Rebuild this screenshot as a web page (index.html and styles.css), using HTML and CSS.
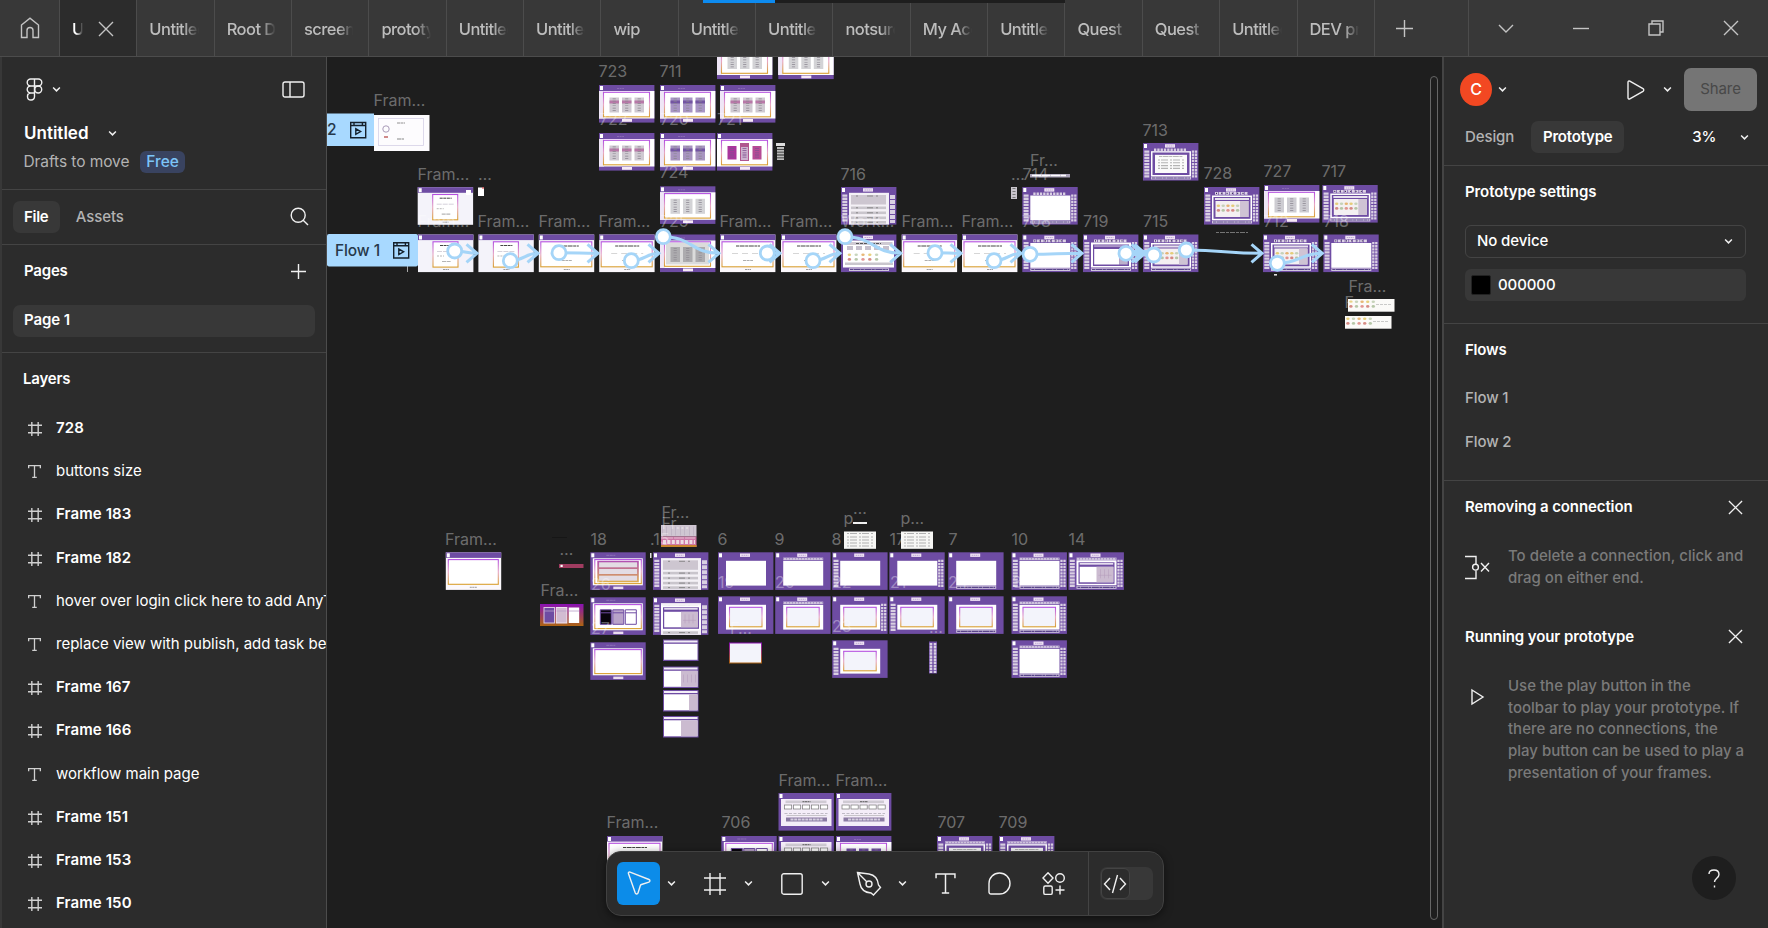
FILE: index.html
```html
<!DOCTYPE html>
<html lang="en">
<head>
<meta charset="utf-8">
<title>Untitled</title>
<link rel="stylesheet" href="styles.css">
</head>
<body>
<svg class="defs" width="0" height="0">
  <defs>
    <linearGradient id="glow" x1="0" y1="0" x2="0" y2="1"><stop offset="0" stop-color="#b44fe0"/><stop offset=".5" stop-color="#e6a6c4"/><stop offset="1" stop-color="#d9a030"/></linearGradient>
    <linearGradient id="fire" x1="0" y1="0" x2="0" y2="1"><stop offset="0" stop-color="#8a12b4"/><stop offset="1" stop-color="#ad6412"/></linearGradient>
    <linearGradient id="fade" x1="0" y1="0" x2="0" y2="1"><stop offset="0" stop-color="#b04fb4"/><stop offset="1" stop-color="#dfb04c"/></linearGradient>
    <symbol id="chev" viewBox="0 0 8 6"><path d="M1 1.2 4 4.2 7 1.2"/></symbol>
    <symbol id="hash" viewBox="0 0 22 22"><path d="M6 0v22M16 0v22M0 5h22M0 17h22"/></symbol>
    <symbol id="tee" viewBox="0 0 20 20"><path d="M1 5V1h18v4M10 1v18M6.5 19h7"/></symbol>
    <symbol id="cross" viewBox="0 0 16 16"><path d="M1 1 15 15M15 1 1 15"/></symbol>
  </defs>
</svg>

<header class="tabs">
  <div class="home"><svg class="ic" width="20" height="22" viewBox="0 0 20 22"><path d="M1.500 8 10 1.200 18.500 8V20.500H13V13.500a3 3 0 0 0-6 0V20.500H1.500Z"/></svg></div>
  <div class="tab active"><span class="name">Untitled</span><svg class="ic" width="16" height="16"><use href="#cross"/></svg></div>
  <div class="tab"><span class="name">Untitled</span></div>
  <div class="tab"><span class="name">Root Do</span></div>
  <div class="tab"><span class="name">screens</span></div>
  <div class="tab"><span class="name">prototype</span></div>
  <div class="tab"><span class="name">Untitled</span></div>
  <div class="tab"><span class="name">Untitled</span></div>
  <div class="tab"><span class="name">wip</span></div>
  <div class="tab"><span class="name">Untitled</span></div>
  <div class="tab"><span class="name">Untitled</span></div>
  <div class="tab"><span class="name">notsure</span></div>
  <div class="tab"><span class="name">My Acc</span></div>
  <div class="tab"><span class="name">Untitled</span></div>
  <div class="tab"><span class="name">Quest</span></div>
  <div class="tab"><span class="name">Quest</span></div>
  <div class="tab"><span class="name">Untitled</span></div>
  <div class="tab"><span class="name">DEV pr</span></div>
  <div class="newtab"><svg class="ic" width="17" height="17" viewBox="0 0 17 17"><path d="M8.500 0V17M0 8.500H17"/></svg></div>
  <div class="win">
    <svg class="ic" width="16" height="9" viewBox="0 0 16 9"><path d="M1 1 8 8 15 1"/></svg>
    <svg class="ic" width="16" height="4" viewBox="0 0 16 4"><path d="M0 2.500H16"/></svg>
    <svg class="ic" width="16" height="16" viewBox="0 0 16 16"><path d="M1 4H12V15H1ZM4 4V1H15V12H12"/></svg>
    <svg class="ic" width="16" height="16"><use href="#cross"/></svg>
  </div>
  <div class="progress"></div>
</header>

<main class="body">
  <aside class="left">
    <section class="filehead">
      <div class="row brand">
        <svg class="ic" width="17" height="23" viewBox="0 0 17 23"><path d="M8.500 1H4.700a3.400 3.400 0 0 0 0 7H8.500ZM8.500 1h3.800a3.400 3.400 0 0 1 0 7H8.500ZM8.500 8H4.700a3.400 3.400 0 0 0 0 7H8.500ZM8.500 15H4.700a3.500 3.500 0 1 0 3.800 3.500Z"/><circle cx="12.200" cy="11.500" r="3.500"/></svg>
        <svg class="ic chev" width="9" height="7"><use href="#chev"/></svg>
        <svg class="ic end" width="23" height="17" viewBox="0 0 23 17"><rect x="1" y="1" width="21" height="15" rx="2"/><path d="M8 1V16"/></svg>
      </div>
      <div class="row title"><span>Untitled</span><svg class="ic chev" width="9" height="7"><use href="#chev"/></svg></div>
      <div class="row place"><span>Drafts to move</span><b class="free">Free</b></div>
    </section>
    <section class="row modes">
      <span class="pill">File</span><span class="muted">Assets</span>
      <svg class="ic end" width="19" height="19" viewBox="0 0 19 19"><circle cx="8.200" cy="8.200" r="7"/><path d="M13.200 13.200 18 18"/></svg>
    </section>
    <section class="pages">
      <div class="row"><h2>Pages</h2><svg class="ic end" width="15" height="15" viewBox="0 0 15 15"><path d="M7.500 0V15M0 7.500H15"/></svg></div>
      <div class="page">Page 1</div>
    </section>
    <section class="layers">
      <h2>Layers</h2>
      <ul>
        <li class="frame"><svg class="ic" width="14" height="14"><use href="#hash"/></svg>728</li>
        <li><svg class="ic" width="13" height="13"><use href="#tee"/></svg>buttons size</li>
        <li class="frame"><svg class="ic" width="14" height="14"><use href="#hash"/></svg>Frame 183</li>
        <li class="frame"><svg class="ic" width="14" height="14"><use href="#hash"/></svg>Frame 182</li>
        <li><svg class="ic" width="13" height="13"><use href="#tee"/></svg>hover over login click here to add AnyText</li>
        <li><svg class="ic" width="13" height="13"><use href="#tee"/></svg>replace view with publish, add task below</li>
        <li class="frame"><svg class="ic" width="14" height="14"><use href="#hash"/></svg>Frame 167</li>
        <li class="frame"><svg class="ic" width="14" height="14"><use href="#hash"/></svg>Frame 166</li>
        <li><svg class="ic" width="13" height="13"><use href="#tee"/></svg>workflow main page</li>
        <li class="frame"><svg class="ic" width="14" height="14"><use href="#hash"/></svg>Frame 151</li>
        <li class="frame"><svg class="ic" width="14" height="14"><use href="#hash"/></svg>Frame 153</li>
        <li class="frame"><svg class="ic" width="14" height="14"><use href="#hash"/></svg>Frame 150</li>
      </ul>
    </section>
  </aside>

  <div class="stage">
    <svg id="canvas" class="canvas" viewBox="327 57 1115 871"></svg>
    <div class="scroll"></div>
    <nav class="toolbar">
      <span class="tool on"><svg class="ic" width="24" height="25" viewBox="0 0 24 25"><path d="M1.500 2.700c-.4-1.100.5-2 1.600-1.600L22 8.500c1.300.5 1.200 2.200-.1 2.600L14.500 13.500a2 2 0 0 0-1.200 1.200L11 22c-.4 1.300-2.200 1.400-2.700.1Z"/></svg></span>
      <svg class="ic chev" width="9" height="7"><use href="#chev"/></svg>
      <span class="tool"><svg class="ic" width="22" height="22"><use href="#hash"/></svg></span>
      <svg class="ic chev" width="9" height="7"><use href="#chev"/></svg>
      <span class="tool"><svg class="ic" width="22" height="22" viewBox="0 0 22 22"><rect x=".8" y=".8" width="20.400" height="20.400" rx="2"/></svg></span>
      <svg class="ic chev" width="9" height="7"><use href="#chev"/></svg>
      <span class="tool"><svg class="ic" width="26" height="26" viewBox="0 0 26 26"><path d="M1.500 1.500 13 3c6 1 9 6 9.500 11l2 2.500-7 7.500-2.500-2C9 21.500 5 18.500 4 13ZM1.500 1.500 11 11"/><circle cx="13" cy="13" r="3"/></svg></span>
      <svg class="ic chev" width="9" height="7"><use href="#chev"/></svg>
      <span class="tool solo"><svg class="ic" width="21" height="21"><use href="#tee"/></svg></span>
      <span class="tool solo"><svg class="ic" width="23" height="23" viewBox="0 0 23 23"><path d="M11.500 1a10.500 10.500 0 0 1 0 21H3a2 2 0 0 1-2-2V11.500A10.500 10.500 0 0 1 11.500 1Z"/></svg></span>
      <span class="tool solo"><svg class="ic" width="24" height="24" viewBox="0 0 24 24"><path d="M6 .8 11 6 6 11.200 1 6ZM18 13.500v9M13.500 18h9"/><circle cx="18" cy="6" r="4.300"/><rect x="1.800" y="14" width="8.400" height="8.400" rx="1.500"/></svg></span>
      <span class="sep"></span>
      <span class="switch"><i><svg class="ic" width="24" height="20" viewBox="0 0 24 20"><path d="M7 4 1.500 10 7 16M17 4 22.500 10 17 16M14.500 1 9.500 19"/></svg></i></span>
    </nav>
  </div>

  <aside class="right">
    <section class="account">
      <div class="row top">
        <span class="avatar">C</span><svg class="ic chev" width="9" height="7"><use href="#chev"/></svg>
        <svg class="ic play" width="18" height="20" viewBox="0 0 18 20"><path d="M1 2.300c0-1 .9-1.600 1.800-1.100L16 8.700c1 .6 1 2 0 2.600L2.800 18.800c-.9.500-1.800-.1-1.800-1.100Z"/></svg>
        <svg class="ic chev" width="9" height="7"><use href="#chev"/></svg>
        <span class="share">Share</span>
      </div>
      <div class="row switcher"><span class="muted">Design</span><span class="pill">Prototype</span><span class="zoom">3%</span><svg class="ic chev" width="9" height="7"><use href="#chev"/></svg></div>
    </section>
    <section class="settings">
      <h2>Prototype settings</h2>
      <div class="row select"><span>No device</span><svg class="ic chev" width="9" height="7"><use href="#chev"/></svg></div>
      <div class="row color"><i></i><span>000000</span></div>
    </section>
    <section class="flows">
      <h2>Flows</h2>
      <p>Flow 1</p>
      <p>Flow 2</p>
    </section>
    <section class="help">
      <div class="row tiphead"><h2>Removing a connection</h2><svg class="ic end" width="15" height="15"><use href="#cross"/></svg></div>
      <div class="tip"><svg class="ic" width="26" height="25" viewBox="0 0 26 25"><path d="M0 1.500H11V9M11 15.500V23.500H0M16 8 24 16.500M24 8 16 16.500"/><circle cx="10.500" cy="12.200" r="2.900"/></svg><p>To delete a connection, click and<br>drag on either end.</p></div>
      <div class="row tiphead second"><h2>Running your prototype</h2><svg class="ic end" width="15" height="15"><use href="#cross"/></svg></div>
      <div class="tip run"><svg class="ic" width="26" height="18" viewBox="0 0 26 18"><path d="M7 2 18 9 7 16Z"/></svg><p>Use the play button in the<br>toolbar to play your prototype. If<br>there are no connections, the<br>play button can be used to play a<br>presentation of your frames.</p></div>
    </section>
    <div class="ask"><svg class="ic" width="12" height="19" viewBox="0 0 12 19"><path d="M1 5C1 2.500 3 1 6 1s5 1.700 5 4.500C11 9 6.500 9.500 6.500 13M6.500 16.500v2"/></svg></div>
  </aside>
</main>
<script src="canvas.js"></script>
</body>
</html>
```
FILE: styles.css
```css
* { box-sizing: border-box; }
body { margin: 0; width: 1768px; height: 928px; overflow: hidden; background: #1e1e1e; color: #fff; font: 500 15px/20px Inter, "Liberation Sans", sans-serif; letter-spacing: -0.1px; display: flex; flex-direction: column; }
h2, p, ul { margin: 0; padding: 0; font: inherit; }
h2 { font-weight: 600; letter-spacing: -0.2px; }
.defs { position: absolute; }
.ic { fill: none; stroke: #f0f0f0; stroke-width: 1.4; flex: none; display: block; }
.ic.chev { stroke-width: 1.3; }
.row { display: flex; align-items: center; }
.end { margin-left: auto; }
.muted { color: #b3b3b3; }

.tabs { position: relative; flex: none; height: 57px; background: #383838; border-bottom: 1px solid #4c4c4c; display: flex; }
.tabs .ic { stroke: #c4c4c4; }
.home { flex: none; width: 60px; border-right: 1px solid #4c4c4c; display: flex; align-items: center; justify-content: center; }
.tab { flex: none; width: 77.35px; border-right: 1px solid #4c4c4c; padding: 1px 15px 0 12px; display: flex; align-items: center; color: #bdbdbd; font-size: 16.5px; letter-spacing: -0.55px; }
.tab .name { flex: 1; min-width: 0; overflow: hidden; white-space: nowrap; -webkit-mask-image: linear-gradient(90deg, #000 70%, transparent); mask-image: linear-gradient(90deg, #000 70%, transparent); }
.tab.active { background: #2c2c2c; color: #fff; padding-right: 21px; }
.tab.active .name { flex: 0 0 11px; margin-right: 15px; -webkit-mask-image: linear-gradient(90deg, #000 35%, transparent); mask-image: linear-gradient(90deg, #000 35%, transparent); }
.newtab { flex: none; width: 94px; border-right: 1px solid #4c4c4c; padding-left: 21px; display: flex; align-items: center; }
.win { display: flex; align-items: center; gap: 59px; padding-left: 29px; }
.progress { position: absolute; left: 703px; top: 0; width: 362px; height: 3px; background: linear-gradient(90deg, #0d8bf0 72px, #1e1e1e 72px); }

.body { flex: 1; min-height: 0; display: flex; }
.left { width: 327px; flex: none; background: #2c2c2c; border-left: 2px solid #383838; border-right: 1px solid #4c4c4c; overflow: hidden; }
.left section { border-bottom: 1px solid #444; }
.filehead { height: 133px; padding: 20px 21px 0 24px; }
.brand { height: 25px; gap: 8.5px; }
.title { margin-top: 20px; height: 22px; gap: 19px; font-size: 17px; font-weight: 600; letter-spacing: 0; margin-left: -2px; }
.place { margin-top: 7px; height: 22px; gap: 11px; color: #b3b3b3; font-weight: 400; font-size: 15.5px; letter-spacing: -0.08px; margin-left: -2.5px; }
.free { background: #394360; color: #7cc4f8; border-radius: 6px; padding: 1px 6px; font-weight: 500; }
.modes { height: 55px; padding: 0 17px 1px 11px; gap: 16px; }
.modes .pill { padding: 0 11.5px 0 11px; }
.pill { background: #383838; border-radius: 7px; font-weight: 600; height: 32px; line-height: 31px; padding: 0 11px; letter-spacing: -0.3px; }
.left .layers { border: 0; }
.pages { height: 108px; padding: 15px 11px 0 11px; }
.pages .row { height: 22px; padding: 0 9px 0 11px; }
.page { margin-top: 23px; height: 32px; line-height: 29px; background: #383838; border-radius: 7px; padding-left: 11px; font-weight: 600; letter-spacing: -0.1px; }
.layers { padding: 16px 0 0 21px; }
.layers ul { list-style: none; margin-top: 17.5px; }
.layers li { height: 43.2px; display: flex; align-items: center; gap: 15px; padding-left: 5px; white-space: nowrap; font-weight: 400; letter-spacing: 0; }
.layers li.frame { font-weight: 600; gap: 14px; letter-spacing: .1px; }
.layers .frame .ic { stroke-width: 2.2; margin-top: 2px; }
.layers .ic { stroke: #d0d0d0; stroke-width: 2; margin-top: 1px; }

.stage { position: relative; flex: 1; min-width: 0; background: #1e1e1e; }
.canvas { display: block; width: 1115px; height: 871px; }
.canvas .label { fill: #fff; fill-opacity: .36; font: 400 16px Inter, sans-serif; letter-spacing: 0; }
.canvas .tag { fill: #26384a; font: 500 15.5px Inter, sans-serif; letter-spacing: -0.1px; }
.canvas .wire { fill: none; stroke: #a5d5f8; stroke-width: 3; }
.canvas .knob { fill: #fff; stroke: #a5d5f8; stroke-width: 2.8; }
.scroll { position: absolute; left: 1103px; top: 19px; width: 8px; height: 844px; border: 1px solid #666; border-radius: 4px; }
.toolbar { position: absolute; left: 279px; top: 794px; width: 558px; height: 65px; background: #2c2c2c; border: 1px solid #414141; border-radius: 15px; box-shadow: 0 2px 8px rgba(0,0,0,.5); display: flex; align-items: center; padding-left: 10px; }
.tool { width: 43px; height: 43px; display: flex; align-items: center; justify-content: center; border-radius: 6px; }
.tool:not(.on) .ic { margin-left: -1px; }
.toolbar .solo .ic { margin-left: -3px; }
.on { background: #0c8ce9; }
.toolbar .chev { margin: 0 18px 0 7px; }
.solo { margin-right: 11.3px; }
.sep { width: 1px; height: 63px; background: #444; }
.switch { width: 53px; height: 33px; margin-left: 11px; background: #383838; border-radius: 7px; }
.switch i { width: 29px; height: 31px; margin: 1px; border: 1px solid #444; border-radius: 6px; background: #2c2c2c; display: flex; align-items: center; justify-content: center; }

.right { position: relative; width: 326px; flex: none; background: #2c2c2c; border-left: 2px solid #444; }
.right section { border-bottom: 1px solid #444; }
.account { height: 109px; padding: 11px 11px 0 16px; }
.top { height: 43px; }
.avatar { width: 32px; height: 33px; border-radius: 50%; background: #f24822; text-align: center; line-height: 33px; font-size: 16px; margin-right: 6px; }
.play { margin: 0 18px 0 120px; }
.share { margin-left: auto; width: 73px; height: 43px; line-height: 41px; text-align: center; background: #757575; color: #484848; border-radius: 7px; font-weight: 400; }
.switcher { height: 32px; margin-top: 10px; padding-left: 5px; }
.switcher .pill { margin-left: 17px; width: 93px; padding: 0; text-align: center; letter-spacing: -0.2px; }
.zoom { margin-left: 68px; margin-right: 21px; width: 27px; white-space: nowrap; }
.settings { height: 158px; padding: 16px 22px 0 21px; }
.select { margin-top: 23px; height: 33px; border: 1px solid #444; border-radius: 6px; padding: 0 12px 1px 11px; justify-content: space-between; }
.color { margin-top: 11px; height: 32px; background: #383838; border-radius: 6px; padding: 0 7px 0 6px; gap: 7px; }
.color i { width: 20px; height: 20px; background: #000; border: 1px solid #222; border-radius: 2px; }
.settings h2, .help h2 { letter-spacing: -0.1px; }
.flows { height: 157px; padding: 16px 22px 0 21px; }
.flows p { margin-top: 28px; color: #b3b3b3; }
.flows p + p { margin-top: 24px; }
.right .help { border: 0; padding: 15px 18px 0 21px; }
.tiphead { height: 22px; padding-right: 7px; }
.tip { margin-top: 27px; display: flex; gap: 17px; color: #7a7a7a; line-height: 21.7px; }
.tip p { white-space: nowrap; letter-spacing: 0; }
.tip .ic { margin-top: 10px; }
.run .ic { margin-top: 13px; }
.second { margin-top: 37.5px; }
.ask { position: absolute; left: 248px; top: 799px; width: 44px; height: 44px; border-radius: 50%; background: #1e1e1e; display: flex; align-items: center; justify-content: center; }
```
FILE: canvas.js
```js
const P = '#6e4ca3', PALE = '#d9cfe2';
const r = (x, y, w, h, fill, extra = '') => `<rect x="${x}" y="${y}" width="${w}" height="${h}" fill="${fill}" ${extra}/>`;
const dash = (x1, y1, x2, y2, color, w, pattern) => `<path d="M${x1} ${y1}L${x2} ${y2}" stroke="${color}" stroke-width="${w}" stroke-dasharray="${pattern}" fill="none"/>`;
const box = (x, y, w, h, fill = '#fff') => r(x, y, w, h, fill, 'stroke="url(#glow)" stroke-width="1.1"');
const W = 55.4, H = 37.6;
const logo = r(1, 1, 3, 4, '#fff');
const title = r(22, 1.2, 10, 3.4, '#efe2f4') + dash(23.5, 3, 30.5, 3, '#a88fc4', .7, '1.5 .6');
const headline = dash(22, 11, 34, 11, '#444', 1, '3 .6');

const columns = (fill, band) => [10.5, 23, 35.5].map(x =>
  r(x, 12.5, 9.5, 15, fill) + (band ? r(x, 15.5, 9.5, 3, band) : '') +
  dash(x + 4.7, 13.5, x + 4.7, 26.5, '#8a8590', 3.2, '.7 1.6')).join('');

const art = {
  login: () => r(0, 0, W, H, '#f4f3fa') + r(0, 0, W, 5.6, P) + logo + box(15, 7.3, 25, 25.3) + headline +
    dash(19, 17, 36, 17, '#b9b4c2', .6, '5 1') + dash(19, 21.5, 26, 21.5, '#999', .7, '2 1') + dash(24, 27, 33, 27, '#b5b5b5', 1.2, '4 .6') + dash(25, 35, 31, 35, '#777', .7, '2 .5'),
  wide: () => r(0, 0, W, H, '#fbf8fc') + r(0, 0, W, 5.6, P) + logo + box(2, 7.3, 51, 25) + dash(16, 11.5, 40, 11.5, '#444', 1, '3 .6 5 .6') +
    dash(12, 19, 44, 19, '#bbb', .6, '6 4') + dash(23, 26, 33, 26, '#999', .8, '3 .6') + dash(25, 35, 31, 35, '#777', .7, '2 .5'),
  blank: () => r(0, 0, W, H, '#fbf8fc') + r(0, 0, W, 5.6, P) + logo + box(2.5, 7.3, 50, 24.7) + dash(24, 35, 31, 35, '#777', .7, '2 .5'),
  cards: (fill, band) => r(0, 0, W, H, P) + logo + dash(18, 3.5, 25, 3.5, '#9c82c0', .6, '2 .6') + r(0, 6, W, 27.5, '#fff') + r(0, 6, 5, 27.5, '#efe6f6') +
    box(4.5, 7.3, 46, 24.5) + columns(fill, band) + r(23, 34, 10, 2.8, '#f6e9f6'),
  pinkcards: () => r(0, 0, W, H, P) + logo + r(0, 6, W, 27.5, '#fff') + box(4.5, 7.3, 46, 24.5) +
    r(10.5, 13, 9, 13.5, '#a9369c') + r(23, 10, 9, 18, '#b0568f') + r(24, 14, 7, 13, '#cdb3cf') + r(35.5, 13, 9, 13.5, '#b64a94') +
    [15, 27.5, 40].map(x => dash(x, 15, x, 25, '#805090', 4, '.8 1.4')).join('') + r(23, 34, 10, 2.8, '#f6e9f6'),
  dark: () => art.inset() + r(10, 12.5, 11, 14.5, '#08040c') + r(22.5, 12.5, 11, 14.5, '#b9a3c9') + r(35, 12.5, 11, 14.5, '#fff') +
    [10, 22.5, 35].map(x => `<path d="M${x} 12.5h11v14.5h-11zM${x} 15.5h11" fill="none" stroke="${P}" stroke-width="1"/>`).join(''),
  inset: () => r(0, 0, W, H, P) + logo + dash(16, 3, 25, 3, '#a18bc4', .6, '3 .5') + r(2.5, 6, 50, 27, '#fff') + box(4.5, 7.3, 46.5, 24) + r(23, 34.3, 10, 2.5, '#eadcf0'),
  bars: () => art.inset() + r(7, 8.5, 41.5, 21.5, 'url(#fade)') + [10, 16.7, 23.4].map(y => r(8.8, y, 38, 5, '#e3dce4')).join(''),
  base: () => r(0, 0, W, H, P) + logo + title,
  L: () => dash(3.8, 7.5, 3.8, 35, PALE, 5, '2.3 .8'),
  R: () => dash(50, 7.5, 50, 35, PALE, 2.3, '2.3 .8') + dash(53, 7.5, 53, 35, PALE, 2.3, '2.3 .8'),
  R2: () => dash(51.5, 8, 51.5, 36, PALE, 5, '4 1'),
  T: () => r(8, 5.3, 40, 2.4, '#cdc0dc') + dash(8, 6.5, 48, 6.5, '#8068a8', 1.6, '.5 2.5'),
  keys: () => dash(11, 6.7, 44, 6.7, PALE, 2.6, '2.3 1'),
  icons: () => dash(11, 6.4, 44, 6.4, '#ddd2e6', 2.8, '3 .7') + dash(12, 6.4, 44, 6.4, '#332450', 1.2, '1 4.3'),
  B: () => r(8, 33.8, 40, 2.7, '#cfc4dc') + dash(9, 35, 47, 35, '#59468a', 1.2, '3 .5 7 .4'),
  C: () => r(8, 8.5, 40, 24.8, '#fff'),
  form: () => r(8, 8.5, 40, 24.8, '#fff') + box(11.5, 11, 32.5, 19.5, '#f3f4fb'),
  list: () => r(8, 5.8, 40, 31.8, '#f4f1f6') + r(10, 8, 35, 9.5, '#cdc6d0') + [19.5, 24.5, 29.5, 34].map(y => r(10, y, 35, 2.6, '#c9c5cc')).join('') +
    [9, 20.8, 25.8, 30.8, 35.3].map(y => dash(15, y, 40, y, '#777', .8, '2 9 6 3')).join(''),
  doc: () => r(8, 8.2, 40, 25.3, '#fff') + r(9.5, 9.5, 37, 22.5, P) + r(12, 11.8, 32, 18.2, '#fafafa') + dash(16, 13.5, 40, 13.5, '#999', .7, '3 .6 6 .6') +
    [17, 19.8, 22.6, 25.4].map(y => dash(15, y, 41, y, '#b4b4b4', 1.1, '2 1 7 2')).join(''),
  win: () => r(8, 8, 40, 25, '#fff') + r(10, 10, 36, 21.5, P) + r(11.2, 10.8, 33.5, 1.5, '#f3eef7') + r(11.2, 14.5, 33.5, 15.5, '#fff') + r(28, 14.5, 17, 15.5, '#cbbbd0'),
  pane: () => r(8, 8, 40, 25, '#fff') + r(10, 10, 36, 21.5, P) + r(11.2, 10.8, 33.5, 1.5, '#b9a6d0') + r(11.2, 14.5, 25, 15.5, '#fff') + r(36.2, 14.5, 8.5, 15.5, '#bdb0cc'),
  grid: () => dash(32, 17, 32, 27, '#b39abb', .5, '9') + dash(36, 17, 36, 27, '#b39abb', .5, '9') + dash(40, 17, 40, 27, '#b39abb', .5, '9') + dash(30, 23, 43, 23, '#b39abb', .5, '20'),
  food: () => r(8, 8.5, 40, 24.8, '#fff') + r(9.5, 10, 37, 21.8, P) + r(11, 11, 34, 2, '#e8e2ee') + r(11.5, 14, 33, 16, '#f4f0f2') + r(36, 14, 8.5, 16, '#cfc3d4') + fruit(13, 17.5, 24),
  work: () => r(2, 6, 51, 27, '#fff') + r(3.5, 7.5, 48, 3, '#cfcad3') + dash(15, 9, 40, 9, '#555', 1, '3 1') + dash(6, 13.5, 49, 13.5, '#c5bfcc', 4, '6 3') + fruit(7, 19, 34) + r(4, 28, 48, 2.5, '#c9c6cd'),
  story: () => r(0, 0, W, H, P) + logo + r(2.5, 6, 50.5, 27, '#f4edf8') + r(7, 7.5, 41, 2.6, '#cfcad3') + dash(24, 8.7, 32, 8.7, '#444', .8, '2 .5') +
    [6, 15, 24, 33, 42].map(x => r(x, 12, 7.2, 4, '#fff', 'stroke="#777" stroke-width=".7"')).join('') + dash(6, 20.5, 49, 20.5, '#a9a5b0', .7, '3 1.5') + dash(8, 22.5, 48, 22.5, '#999', .5, '40') + r(7.5, 24.5, 41, 4, '#8b7ba3') + dash(12, 26.5, 44, 26.5, '#d6cfe0', 2, '3 .7')
};
function fruit(x, y, w) {
  const c = ['#dfc050', '#d97572', '#b5c7a5', '#c9665e', '#e0a04a', '#9fb68c'];
  let s = '';
  for (let j = 0; j < 2; j++) for (let i = 0; i < 5; i++) s += `<ellipse cx="${x + 1.4 + i * w / 5}" cy="${y + 1.2 + j * 4.7}" rx="1.7" ry="1.3" fill="${c[(i * 2 + j * 3) % 6]}" opacity=".75"/>`;
  return s;
}
const scene = [];
const put = (x, y, parts, ...args) => scene.push(`<g transform="translate(${x} ${y})">${parts.split(' ').map(p => art[p](...args)).join('')}</g>`);
const text = (x, y, s, cls = 'label') => `<text x="${x}" y="${y}" class="${cls}">${s}</text>`;

/* top group */
scene.push(r(374, 115, 55.5, 36, '#fdfcfe') + r(378.5, 118.5, 45, 27, 'none', 'stroke="#d5d0e6" stroke-width=".8"') + '<circle cx="386" cy="129" r="3.2" fill="none" stroke="#a99bb8"/>' + r(384, 136, 4, 2, '#d08a8a') + dash(397, 123, 405, 123, '#777', .8, '3 .5') + dash(397, 139, 404, 139, '#888', 1.2, '4 .5'));
put(417.7, 187.2, 'login');
scene.push(r(466, 190, 5, 5, '#fff') + r(478, 187.5, 6, 8.5, '#fff') + r(482, 187.5, 2, 1, '#d33'));
put(717, 41.5, 'cards', '#d3d3d6'); put(778.3, 41.5, 'cards', '#d3d3d6');
put(599, 85, 'cards', '#cfc9d1', '#b878a8'); put(660, 85, 'cards', '#a794c4', '#7355a2'); put(720, 85, 'cards', '#cfc9d1', '#b878a8');
put(599, 133, 'cards', '#cfc9d1', '#b878a8'); put(660, 133, 'cards', '#a794bf', '#7355a2'); put(717, 133, 'pinkcards');
scene.push(r(776, 143, 9, 3, '#ddd') + dash(780.5, 147, 780.5, 160, '#bbb', 7, '2 .8'));
put(660, 186.3, 'cards', '#d3d3d6');
put(841, 187, 'base L R2 list'); put(1022.3, 187, 'base L R keys C B');
scene.push(r(1011, 187, 6, 12, '#c9c5cc') + dash(1014, 188, 1014, 198, '#777', 3, '1 2'));
scene.push(r(1030, 174, 40, 3.5, '#aaa3b8') + dash(1032, 175.5, 1066, 175.5, '#fff', 1.3, '9 .5'));
put(1143, 143, 'base L R keys doc B'); put(1204, 187, 'base L R icons food B'); put(1264, 185, 'cards', '#cdccd2'); put(1322.3, 185, 'base L R icons food B');
scene.push(dash(1216, 232.5, 1248, 232.5, '#999', .7, '3 1 5 1'), r(1274, 274, 3, 1.6, '#ddd'), r(407, 266, .8, 6, '#ccc'));
const Y = 234.5;
['login', 'login', 'wide', 'wide'].forEach((t, i) => put(418 + i * 60.4, Y, t));
put(660, Y, 'cards', '#b7b5ba'); scene.push(r(666, Y + 8, 43, 22, '#999', 'opacity=".35"'));
put(720, Y, 'wide'); put(781, Y, 'wide'); put(841, Y, 'base work B'); put(901.7, Y, 'wide'); put(962, Y, 'wide');
put(1022.3, Y, 'base L R icons C B'); put(1083, Y, 'base L R icons pane B'); put(1143, Y, 'base L R icons food B');
put(1263, Y, 'base L R icons food B'); put(1323.3, Y, 'base L R icons C B');
for (const [x, y] of [[1348, 299], [1345, 316]]) scene.push(r(x, y, 46.5, 12.7, '#fbfaf8') + fruit(x + 1.5, y + 1.5, 28) + dash(x + 28, y + 5.5, x + 44, y + 5.5, '#aaa', .6, '3 1'));

/* middle group */
put(445.8, 552.3, 'blank');
scene.push(r(559, 564, 24.5, 4, '#a03c60') + r(560.5, 564.8, 2.2, 2.2, '#fff'), r(552, 537, 15, .6, '#111'));
scene.push(r(540, 604, 43.5, 22, 'url(#fire)') + r(544, 607.5, 10.5, 15.5, P, 'stroke="#d9c6e0"') + r(556.3, 607.5, 10.5, 15.5, '#d2bcd2', 'stroke="#f0e4f0"') + r(568.7, 607.5, 10.5, 15.5, '#fff') + dash(544, 611, 579, 611, '#b79fc8', .8, '10 2.5'));
put(590.3, 552.3, 'bars'); put(590.3, 597.3, 'dark'); put(590.3, 642.3, 'inset');
scene.push(r(650, 553, 1.5, 5, '#ddd'));
put(653, 552.3, 'base L R2 list'); put(653, 597.3, 'base L R2 list win grid');
[639.5, 666.5, 690, 716].forEach((y, i) => scene.push(r(663, y, 35.5, 21.5, P) + r(664, y + 1, 33.5, 2, '#f3eef7') + r(664, y + 4.3, 33.5, 16, '#fff') + (i ? r(i === 2 ? 689 : 681, y + 4.3, i === 2 ? 8.5 : 16.5, 16, '#cbbbd0') : '') + (i === 1 ? dash(683, y + 12, 696, y + 12, '#b39abb', 8, '.5 3.5') : '')));
scene.push(r(661, 525, 35.5, 11.5, '#cfc6d2') + r(661, 536.5, 35.5, 10.5, '#cf78a8') + r(661, 545, 35.5, 2, '#c8852f') + dash(663, 542, 695, 542, '#ecdbe3', 4, '3 1.4') + dash(663, 538, 695, 538, '#e3bfd2', 1.2, '10 1') + dash(662, 531, 696, 531, '#b3a6b9', 9, '.5 4'));
put(718, 552.3, 'base C'); put(718, 596.3, 'base form'); put(775.2, 552.3, 'base T C'); put(775.2, 596.3, 'base T form');
put(832.2, 552.3, 'base L C'); put(832.2, 596.3, 'base R form'); put(832.2, 640.3, 'base L form');
put(889.3, 552.3, 'base R C'); put(889.3, 596.3, 'base L form'); put(948.2, 552.3, 'base C B'); put(948.2, 596.3, 'base form B');
put(1011.5, 552.3, 'base L R T C B'); put(1011.5, 596.3, 'base L R T form B'); put(1011.5, 640.3, 'base L R T C B'); put(1068.5, 552.3, 'base L R T win grid B');
scene.push(r(729.5, 643, 32, 20, '#f3f4fb', 'stroke="url(#fire)"'));
for (const x of [844, 901]) scene.push(r(x, 531.5, 32, 17.3, '#f6f6f4') + [533.5, 537, 540, 543, 546].map(y => dash(x + 3, y, x + 29, y, '#b0b0b0', 1, '2 1 7 2')).join(''));
scene.push(r(853, 522, 14, 2, '#eee') + r(929, 641.5, 8, 32, P) + dash(931, 643, 931, 673, PALE, 2.6, '2.5 .6') + dash(935, 643, 935, 673, PALE, 2.6, '2.5 .6'));

/* bottom group */
put(778.5, 793, 'story'); put(836, 793, 'story'); put(607, 836, 'wide'); put(721.3, 836, 'dark'); put(778.5, 836, 'story'); put(836, 836, 'cards', P);
put(937, 836, 'base L R T doc'); put(999, 836, 'base L R T doc');

/* labels */
const F = 'Fram…';
const labels = [[373.5, 105.5, F], [417.5, 179.5, F], [478, 179.5, '…'], [417.5, 226.5, F], [477.5, 226.5, F], [538.5, 226.5, F], [598.5, 226.5, F], [660, 226.5, 725], [719.5, 226.5, F], [780.5, 226.5, F], [841, 226.5, 'Work…'], [901.5, 226.5, F], [961.5, 226.5, F], [1022, 226.5, 708], [1083, 226.5, 719], [1143, 226.5, 715], [1263.5, 226.5, 712], [1323.5, 226.5, 718],
  [598.5, 76.5, 723], [659.5, 76.5, 711], [599, 125, 722], [660, 125, 720], [717, 125, 721], [659.5, 178, 724], [840.5, 179.5, 716], [1011, 179.5, '…'], [1022.5, 179.5, 714], [1030, 165.5, 'Fr…'], [1142.5, 135.7, 713], [1203.5, 178.5, 728], [1263.5, 177, 727], [1321.5, 177, 717], [1348.5, 292, 'Fra…'], [1344.5, 307.5, 'F'],
  [445, 544.7, F], [559.5, 554.5, '…'], [540.5, 596, 'Fra…'], [590.5, 544.7, 18], [591, 589.5, 26], [591, 634, 27], [661.5, 518, 'Fr…'], [661.5, 528.5, 'Fr…'], [650, 544.7, '.15'], [717.5, 544.7, 6], [774.5, 544.7, 9], [831.5, 544.7, 8], [889.5, 544.7, 17], [948.5, 544.7, 7], [1011.5, 544.7, 10], [1068.5, 544.7, 14],
  [718, 588, 19], [775, 588, 20], [832, 588, 22], [890, 588, 21], [948, 588, 24], [1012, 588, 3], [832, 632, 23], [730, 634, 'F…'], [843.5, 524, 'p…'], [853, 513.5, '…'], [900.5, 524, 'p…'], [929, 633, '…'],
  [606.5, 828, F], [721.5, 828, 706], [778.5, 786, F], [835.5, 786, F], [937.5, 828, 707], [998.5, 828, 709]];
labels.forEach(l => scene.push(text(...l)));

/* flow tags */
const flag = (x, y) => `<g transform="translate(${x} ${y})" fill="none" stroke="#14202b" stroke-width="1.4"><path d="M.7 .7h15v15.3h-15zM.7 3.7h15M4 .7v3M12.4 .7v3M5.8 7v5.5l4.8-2.7z"/></g>`;
scene.push(r(327, 113.5, 47, 32.5, '#a8d9ff') + text(327, 135, '2', 'tag') + flag(350, 121.8));
scene.push(r(327, 234, 91, 32.5, '#a8d9ff', 'rx="2"') + text(335, 255.5, 'Flow 1', 'tag') + flag(393, 242));

/* connections: start x, start y, end x */
const Z = 253.3;
[[454.7, 251, 478], [510.3, 260.7, 539], [559, 252.7, 599], [631.3, 260.7, 660], [663.3, 236.7, 720], [767.3, 253, 781], [813, 260.7, 841], [845, 236.7, 901.7], [935, 252.7, 962], [994, 260.7, 1022], [1030, 254.3, 1083], [1126, 253.3, 1143], [1153.7, 255, 1146], [1186.3, 250, 1263], [1277.3, 263.3, 1323.3]].forEach(([x, y, e]) => {
  const m = (x + e) / 2;
  scene.push(`<path class="wire" d="M${x} ${y}C${m} ${y} ${m} ${Z} ${e - 1} ${Z}M${e - 11.5} ${Z - 9}L${e - 1} ${Z}L${e - 11.5} ${Z + 9}"/>`);
  scene.push(`<circle class="knob" cx="${x}" cy="${y}" r="7"/>`);
});
scene.push('<path class="wire" d="M1133 253H1147" style="stroke-width:6"/>');
document.getElementById('canvas').innerHTML = scene.join('');
```
